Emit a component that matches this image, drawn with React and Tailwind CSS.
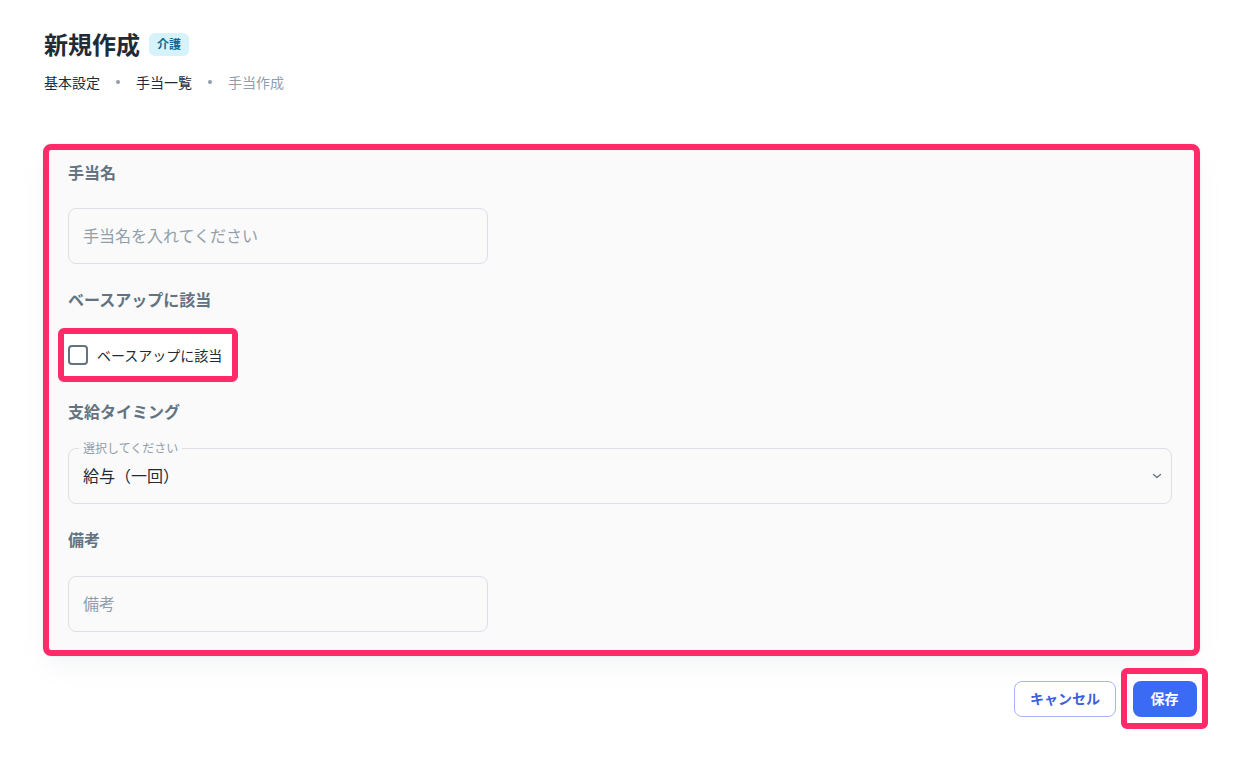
import React from "react";

const PINK = "border-[#ff2a68]";

function Label({ children, className = "" }) {
  return (
    <div className={`text-[16px] leading-[24px] font-bold text-[#637381] ${className}`}>{children}</div>
  );
}

export default function App() {
  return (
    <div className="min-h-screen bg-white pl-[43px] pr-[58px] font-['Noto_Sans_CJK_JP','Noto_Sans',sans-serif]">
      <div className="pt-[26px] flex items-center gap-[9px] pl-px">
        <h1 className="text-[24px] leading-[36px] font-bold text-[#212b36]">新規作成</h1>
        <span className="h-[23px] px-[8px] rounded-[6px] bg-[#d6f2fb] text-[12px] font-bold text-[#0b6b93] flex items-center">
          介護
        </span>
      </div>
      <div className="mt-[9px] flex items-center text-[14px] leading-[22px] pl-px">
        <span className="text-[#212b36]">基本設定</span>
        <span className="mx-[16px] w-[4px] h-[4px] rounded-full bg-[#919eab]" />
        <span className="text-[#212b36]">手当一覧</span>
        <span className="mx-[16px] w-[4px] h-[4px] rounded-full bg-[#919eab]" />
        <span className="text-[#919eab]">手当作成</span>
      </div>

      <div
        className={`mt-[51px] border-[6px] ${PINK} rounded-[8px] bg-[#fafafa] pl-[19px] pr-[22px] pt-[10px] pb-[18px] shadow-[0_0_2px_0_rgba(145,158,171,0.2),0_12px_24px_-4px_rgba(145,158,171,0.12)]`}
      >
        <Label>手当名</Label>
        <div className="mt-[24px] h-[56px] w-[420px] rounded-[8px] border border-[#dcdfe4] flex items-center px-[14px] pb-[2px] text-[16px] text-[#919eab]">
          手当名を入れてください
        </div>

        <Label className="mt-[23px]">ベースアップに該当</Label>
        <div className={`mt-[17px] -ml-[10px] w-[180px] h-[54px] border-[6px] ${PINK} rounded-[6px] bg-white flex items-center pl-[4px]`}>
          <span className="w-[20px] h-[20px] rounded-[4px] border-2 border-[#637381]" />
          <span className="ml-[9px] text-[14px] text-[#212b36]">ベースアップに該当</span>
        </div>

        <Label className="mt-[17px]">支給タイミング</Label>
        <div className="relative mt-[25px] h-[56px] rounded-[8px] border border-[#dcdfe4] flex items-center pl-[14px] pr-[8px]">
          <span className="absolute -top-[7px] left-[10px] px-[4px] bg-[#fafafa] text-[12px] leading-[12px] text-[#919eab]">
            選択してください
          </span>
          <span className="flex-1 pb-[2px] text-[16px] text-[#212b36]">給与（一回）</span>
          <svg width="12" height="12" viewBox="0 0 24 24" fill="none" stroke="#637381" strokeWidth="2.5" strokeLinecap="round" strokeLinejoin="round">
            <path d="M5 9l7 6 7-6" />
          </svg>
        </div>

        <Label className="mt-[23px]">備考</Label>
        <div className="mt-[25px] h-[56px] w-[420px] rounded-[8px] border border-[#dcdfe4] flex items-center px-[14px] pb-[2px] text-[16px] text-[#919eab]">
          備考
        </div>
      </div>

      <div className="mt-[12px] -mr-[8px] flex justify-end items-center">
        <button className="w-[102px] h-[36px] rounded-[8px] border border-[#a3b6fb] bg-white text-[14px] font-bold text-[#3c5ee0]">
          キャンセル
        </button>
        <div className={`ml-[5px] w-[87px] h-[61px] border-[6px] ${PINK} rounded-[6px] bg-white flex items-center justify-center`}>
          <button className="w-[64px] h-[36px] rounded-[8px] bg-[#3b6bf5] text-[14px] font-bold text-white">
            保存
          </button>
        </div>
      </div>
    </div>
  );
}
